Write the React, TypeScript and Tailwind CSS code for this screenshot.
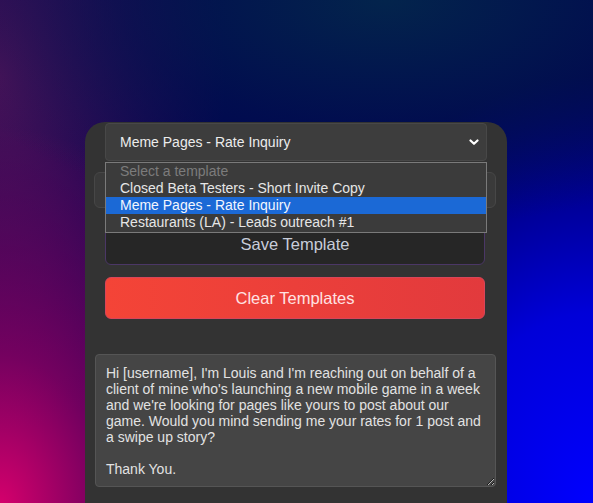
import { useState } from 'react';

const templates = [
  'Closed Beta Testers - Short Invite Copy',
  'Meme Pages - Rate Inquiry',
  'Restaurants (LA) - Leads outreach #1',
];

const message = `Hi [username], I'm Louis and I'm reaching out on behalf of a client of mine who's launching a new mobile game in a week and we're looking for pages like yours to post about our game. Would you mind sending me your rates for 1 post and a swipe up story?

Thank You.`;

export default function App() {
  const [selected, setSelected] = useState('Meme Pages - Rate Inquiry');
  const [text, setText] = useState(message);

  return (
    <div className="min-h-screen w-full overflow-hidden font-['Liberation_Sans',Arial,sans-serif] bg-[#000050] bg-[radial-gradient(ellipse_80%_45%_at_65%_0%,#03244c_0%,rgba(2,22,78,0.6)_55%,rgba(0,0,80,0)_100%),radial-gradient(ellipse_45%_75%_at_0%_100%,#d6006c_0%,rgba(150,0,100,0.75)_40%,rgba(80,0,90,0)_100%),radial-gradient(ellipse_38%_70%_at_0%_15%,rgba(85,20,90,0.9)_0%,rgba(60,20,80,0)_100%),radial-gradient(ellipse_55%_85%_at_100%_100%,#0000ff_0%,#0000d8_45%,rgba(0,0,120,0)_100%)]">
      <div className="flex justify-center pt-[122px] pr-px">
        <div className="w-[422px] rounded-t-[20px] bg-[#333333] pt-px pb-5">
          <div className="relative mx-5">
            <select
              value={selected}
              onChange={(e) => setSelected(e.target.value)}
              className="block h-[38px] w-full appearance-none rounded-[4px] border border-[#484848] bg-[#3d3d3d] pl-[14px] text-[14px] text-[#ececec] outline-none"
            >
              <option value="">Select a template</option>
              {templates.map((t) => (
                <option key={t} value={t}>
                  {t}
                </option>
              ))}
            </select>
            <svg
              className="pointer-events-none absolute right-[8px] top-[14px] h-[10px] w-[10px] text-white"
              viewBox="0 0 10 10"
              fill="none"
              stroke="currentColor"
              strokeWidth="2.2"
              strokeLinecap="round"
              strokeLinejoin="round"
            >
              <path d="M1.5 3.5 L5 6.8 L8.5 3.5" />
            </svg>

            {/* open dropdown list */}
            <div className="absolute left-0 right-0 top-[39px] z-10 border border-[#7a7a7a] bg-[#3b3b3b] pb-px text-[14px] leading-[17px]">
              <div className="pl-[14px] text-[#7c7c7c]">Select a template</div>
              {templates.map((t) => (
                <div
                  key={t}
                  className={`pl-[14px] ${t === selected ? 'bg-[#1b69d6] text-[#f2f6ff]' : 'text-[#e6e6e6]'}`}
                >
                  {t}
                </div>
              ))}
            </div>
          </div>

          <input
            type="text"
            placeholder="Template name"
            className="mt-[11px] ml-[9px] block h-[36px] w-[402px] rounded-[6px] border border-[#474747] bg-[#3a3a3a] px-3 text-[14px] text-[#ddd] outline-none"
          />

          <button className="mx-5 mt-[15px] block h-[42px] w-[380px] rounded-[6px] border border-[#4b3766] bg-[#262626] text-[16.5px] text-[#c8cdda]">
            Save Template
          </button>

          <button className="mx-5 mt-3 block h-[42px] w-[380px] rounded-[6px] border border-[#d8455a] bg-[linear-gradient(90deg,#f44437,#e23a3d)] text-[16.5px] text-[#ffe2e2]">
            Clear Templates
          </button>

          <textarea
            value={text}
            onChange={(e) => setText(e.target.value)}
            className="ml-[10px] mt-[35px] block h-[133px] w-[401px] rounded-[4px] border border-[#555555] bg-[#454545] px-[10px] pt-[10px] text-[14px] leading-[16px] text-[#e2e2e2] outline-none"
          />
        </div>
      </div>
    </div>
  );
}
